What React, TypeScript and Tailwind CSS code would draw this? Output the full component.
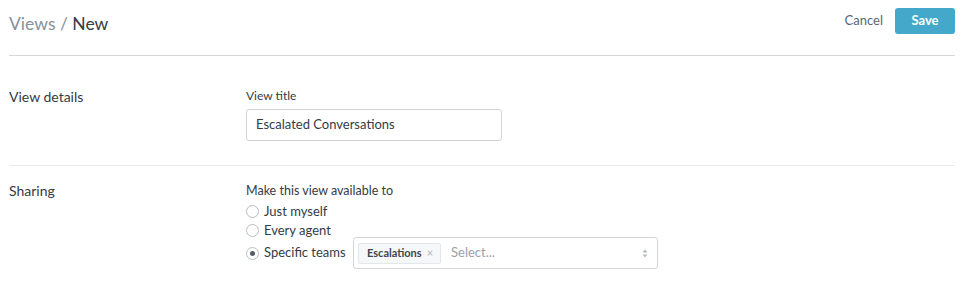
export default function App() {
  const options = [
    { label: "Just myself", checked: false },
    { label: "Every agent", checked: false },
  ];

  return (
    <div className="w-[964px] h-[289px] bg-white px-[9px] text-[#333b45] font-['Lato',sans-serif]">
      <div className="flex items-start justify-between h-[56px] border-b border-[#d6d6d6]">
        <h1 className="text-[17.5px] leading-none mt-[15px]">
          <span className="text-[#86929c]">Views /</span> New
        </h1>
        <div className="flex items-center gap-[12px] mt-[8px]">
          <button className="text-[13px] text-[#5c6670]">Cancel</button>
          <button className="h-[26px] w-[60px] rounded-[3px] bg-[#43a8c9] text-white text-[13px] font-bold">
            Save
          </button>
        </div>
      </div>

      <div className="flex border-b border-[#e8e8e8] pt-[32px] pb-[24px]">
        <div className="w-[237px] text-[14px] leading-[18px]">View details</div>
        <div className="flex flex-col">
          <label className="text-[12px] leading-[16px] mb-[5px]">View title</label>
          <div className="w-[256px] h-[32px] border border-[#cfd3d6] rounded-[3px] flex items-center px-[9px] text-[13px]">
            Escalated Conversations
          </div>
        </div>
      </div>

      <div className="flex pt-[17px]">
        <div className="w-[237px] text-[14px] leading-[18px] -mt-[1px]">Sharing</div>
        <div className="flex flex-col">
          <div className="text-[12.5px] leading-[16px] mb-[3px]">Make this view available to</div>
          {options.map((o) => (
            <div key={o.label} className="flex items-center gap-[5px] h-[19px] text-[13px]">
              <span className="w-[13px] h-[13px] rounded-full border border-[#b9bec3] bg-white" />
              {o.label}
            </div>
          ))}
          <div className="flex items-center -mt-[3px]">
            <div className="flex items-center gap-[5px] w-[107px] text-[13px]">
              <span className="w-[13px] h-[13px] rounded-full border border-[#b9bec3] bg-white flex items-center justify-center">
                <span className="w-[5px] h-[5px] rounded-full bg-[#555d66]" />
              </span>
              Specific teams
            </div>
            <div className="w-[305px] h-[32px] border border-[#d2d6d9] rounded-[3px] flex items-center pl-[4px] pr-[9px]">
              <span className="flex items-center h-[21px] pl-[8px] pr-[7px] gap-[5px] bg-[#f5f7f9] border border-[#e3e7ea] rounded-[2px] text-[11px] font-bold text-[#3d4650]">
                Escalations
                <span className="text-[#b0b6bb] font-normal text-[11px]">×</span>
              </span>
              <span className="ml-[10px] text-[13px] text-[#9aa1a7] flex-1">Select...</span>
              <svg width="6" height="9" viewBox="0 0 6 9">
                <path d="M3 0.5L5.5 3.5H0.5Z" fill="#b4b9be" />
                <path d="M3 8.5L5.5 5.5H0.5Z" fill="#b4b9be" />
              </svg>
            </div>
          </div>
        </div>
      </div>
    </div>
  );
}
